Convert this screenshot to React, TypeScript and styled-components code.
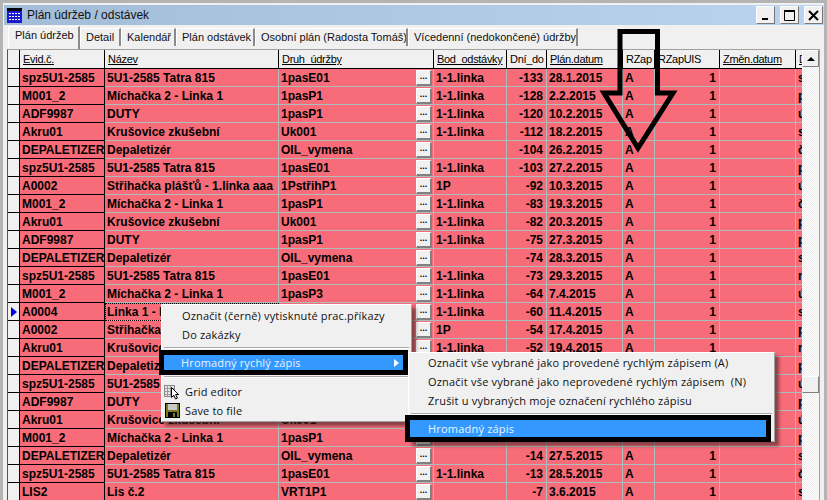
import React from 'react';
import styled, { createGlobalStyle } from 'styled-components';

const PINK = '#f76c78';
const LINE = '#adbcbc';
const FACE = '#f0f0f0';
const FRAME = '#b4b4b4';
const BLUE = '#3399ff';
const COLUMNS = '12px 85px 174px 155px 73px 40px 76px 32px 65px 76px 100px';

type Row = [string, string, string, string, number, string, string];

const ROWS: Row[] = [
  ['spz5U1-2585', '5U1-2585 Tatra 815', '1pasE01', '1-1.linka', -133, '28.1.2015', 's'],
  ['M001_2', 'Míchačka 2 - Linka 1', '1pasP1', '1-1.linka', -128, '2.2.2015', 'p'],
  ['ADF9987', 'DUTY', '1pasP1', '1-1.linka', -120, '10.2.2015', 'ú'],
  ['Akru01', 'Krušovice zkušební', 'Uk001', '1-1.linka', -112, '18.2.2015', 's'],
  ['DEPALETIZER', 'Depaletizér', 'OIL_vymena', '', -104, '26.2.2015', 'č'],
  ['spz5U1-2585', '5U1-2585 Tatra 815', '1pasE01', '1-1.linka', -103, '27.2.2015', 'p'],
  ['A0002', 'Střihačka plášťů - 1.linka aaa', '1PstřihP1', '1P', -92, '10.3.2015', 'ú'],
  ['M001_2', 'Míchačka 2 - Linka 1', '1pasP1', '1-1.linka', -83, '19.3.2015', 'č'],
  ['Akru01', 'Krušovice zkušební', 'Uk001', '1-1.linka', -82, '20.3.2015', 'p'],
  ['ADF9987', 'DUTY', '1pasP1', '1-1.linka', -75, '27.3.2015', 'p'],
  ['DEPALETIZER', 'Depaletizér', 'OIL_vymena', '', -74, '28.3.2015', 's'],
  ['spz5U1-2585', '5U1-2585 Tatra 815', '1pasE01', '1-1.linka', -73, '29.3.2015', 'r'],
  ['M001_2', 'Míchačka 2 - Linka 1', '1pasP3', '1-1.linka', -64, '7.4.2015', 'ú'],
  ['A0004', 'Linka 1 - Lis', '1pasP1', '1-1.linka', -60, '11.4.2015', 's'],
  ['A0002', 'Střihačka plášťů - 1.linka aaa', '1PstřihP1', '1P', -54, '17.4.2015', 'p'],
  ['Akru01', 'Krušovice zkušební', 'Uk001', '1-1.linka', -52, '19.4.2015', 'r'],
  ['DEPALETIZER', 'Depaletizér', 'OIL_vymena', '', -46, '25.4.2015', 'p'],
  ['spz5U1-2585', '5U1-2585 Tatra 815', '1pasE01', '1-1.linka', -45, '26.4.2015', 'ú'],
  ['ADF9987', 'DUTY', '1pasP1', '1-1.linka', -36, '5.5.2015', 'p'],
  ['Akru01', 'Krušovice zkušební', 'Uk001', '1-1.linka', -24, '17.5.2015', 'ú'],
  ['M001_2', 'Míchačka 2 - Linka 1', '1pasP1', '1-1.linka', -15, '26.5.2015', 'p'],
  ['DEPALETIZER', 'Depaletizér', 'OIL_vymena', '', -14, '27.5.2015', 's'],
  ['spz5U1-2585', '5U1-2585 Tatra 815', '1pasE01', '1-1.linka', -13, '28.5.2015', 'č'],
  ['LIS2', 'Lis č.2', 'VRT1P1', '', -7, '3.6.2015', 's'],
];

const TABS = [
  { label: 'Plán údržeb', width: 72 },
  { label: 'Detail', width: 41 },
  { label: 'Kalendář', width: 55 },
  { label: 'Plán odstávek', width: 79 },
  { label: 'Osobní plán (Radosta Tomáš)', width: 153 },
  { label: 'Vícedenní (nedokončené) údržby', width: 170 },
];

const HEADERS: { label: string; plain?: boolean }[] = [
  { label: 'Evid.č.' },
  { label: 'Název' },
  { label: 'Druh_údržby' },
  { label: 'Bod_odstávky' },
  { label: 'Dní_do', plain: true },
  { label: 'Plán.datum' },
  { label: 'RZap', plain: true },
  { label: 'RZapUIS', plain: true },
  { label: 'Změn.datum' },
  { label: 'Dílna' },
];

const GlobalStyle = createGlobalStyle`
  html, body {
    margin: 0;
    padding: 0;
    background: ${FACE};
  }
`;

const Window = styled.div`
  position: relative;
  box-sizing: border-box;
  width: 827px;
  height: 500px;
  overflow: hidden;
  display: flex;
  flex-direction: column;
  background: ${FACE};
  border: 3px solid ${FRAME};
  border-bottom: 0;
  font-family: 'Liberation Sans', Arial, sans-serif;
  color: #000;
`;

const TitleBar = styled.div`
  box-sizing: border-box;
  height: 20px;
  margin: 2px 0 0 1px;
  padding: 0 1px 0 3px;
  display: flex;
  align-items: center;
  gap: 5px;
  flex-shrink: 0;
  background: linear-gradient(90deg, #a3bcd8, #bad4f0);
`;

const Title = styled.span`
  flex: 1;
  font-size: 12px;
  color: #111;
`;

const WinButton = styled.div`
  box-sizing: border-box;
  width: 19px;
  height: 18px;
  display: flex;
  align-items: center;
  justify-content: center;
  background: ${FACE};
  border: 1px solid #fff;
  border-right-color: #777;
  border-bottom-color: #777;
`;

const TabStrip = styled.div`
  height: 24px;
  padding-left: 5px;
  display: flex;
  align-items: flex-end;
  flex-shrink: 0;
`;

const Tab = styled.div<{ $active?: boolean; $width: number }>`
  box-sizing: border-box;
  width: ${(p) => p.$width}px;
  height: ${(p) => (p.$active ? 23 : 18)}px;
  margin-bottom: ${(p) => (p.$active ? 0 : 3)}px;
  padding: ${(p) => (p.$active ? '1px 0 0 6px' : '1px 0 0 5px')};
  font-size: 11px;
  line-height: 14px;
  white-space: nowrap;
  overflow: hidden;
  color: #111;
  background: ${FACE};
  border-top: 1px solid #fff;
  border-left: 1px solid #fff;
  border-right: 2px solid #8a8a8a;
`;

const GridPanel = styled.div`
  flex: 1;
  min-height: 0;
  margin: 0 4px 0 4px;
  display: flex;
  border-top: 1px solid #a0a0a0;
  border-left: 1px solid #555;
`;

const Table = styled.div`
  flex: 1;
  min-width: 0;
  overflow: hidden;
`;

const GridRow = styled.div`
  display: grid;
  grid-template-columns: ${COLUMNS};
  height: 18px;
`;

const HeaderRow = styled(GridRow)`
  height: 19px;
`;

const Cell = styled.div<{ $right?: boolean; $key?: boolean; $focus?: boolean }>`
  box-sizing: border-box;
  display: flex;
  align-items: center;
  justify-content: ${(p) => (p.$right ? 'flex-end' : 'space-between')};
  padding: 1px ${(p) => (p.$right ? 3 : 1)}px 0 2px;
  overflow: hidden;
  white-space: nowrap;
  font-size: 12px;
  font-weight: bold;
  background: ${PINK};
  border-right: 1px solid ${(p) => (p.$key ? '#000' : LINE)};
  border-bottom: 1px solid ${(p) => (p.$key ? '#000' : LINE)};
  outline: ${(p) => (p.$focus ? '1px dotted #000' : 'none')};
  outline-offset: -1px;
`;

const Indicator = styled.div`
  box-sizing: border-box;
  display: flex;
  align-items: center;
  justify-content: center;
  background: ${FACE};
  border-right: 1px solid #000;
  border-bottom: 1px solid #000;
`;

const HeaderCell = styled.div<{ $plain?: boolean }>`
  box-sizing: border-box;
  padding: 2px 0 0 3px;
  overflow: hidden;
  white-space: nowrap;
  font-size: 11px;
  line-height: 14px;
  letter-spacing: -0.3px;
  background: ${FACE};
  border-right: 1px solid #000;
  border-bottom: 1px solid #000;
  text-decoration: ${(p) => (p.$plain ? 'none' : 'underline')};
`;

const EllipsisButton = styled.div`
  box-sizing: border-box;
  flex-shrink: 0;
  width: 16px;
  height: 16px;
  font-size: 9px;
  line-height: 11px;
  text-align: center;
  background: ${FACE};
  border: 1px solid #fff;
  border-right: 2px solid #808080;
  border-bottom: 2px solid #808080;
`;

const Scrollbar = styled.div`
  position: relative;
  flex: 0 0 17px;
  display: flex;
  flex-direction: column;
  background: repeating-conic-gradient(#fff 0 25%, #ececec 0 50%) 0 0 / 2px 2px;
  border-right: 1px solid #a0a0a0;
`;

const ScrollUp = styled.div`
  box-sizing: border-box;
  height: 17px;
  display: flex;
  align-items: center;
  justify-content: center;
  background: ${FACE};
  border: 1px solid #fff;
  border-right-color: #808080;
  border-bottom-color: #808080;
`;

const ScrollThumb = styled(ScrollUp)`
  position: absolute;
  top: 326px;
  left: 0;
  right: 0;
`;

const UpTriangle = styled.span`
  border: 4px solid transparent;
  border-top: 0;
  border-bottom: 4px solid #000;
`;

const Menu = styled.div`
  position: absolute;
  box-sizing: border-box;
  background: #f0f0f0;
  border: 1px solid #fff;
  border-right-color: #a0a0a0;
  border-bottom-color: #a0a0a0;
  box-shadow: 4px 4px 3px rgba(50, 30, 30, 0.55);
  font-family: 'Open Sans', sans-serif;
  font-size: 11px;
  letter-spacing: 0.15px;
  color: #111;
`;

const MainMenu = styled(Menu)`
  left: 158px;
  top: 301px;
  width: 251px;
  height: 118px;
  padding-top: 1px;
`;

const SubMenu = styled(Menu)`
  left: 405px;
  top: 349px;
  width: 367px;
  height: 90px;
  letter-spacing: 0.2px;
`;

const MenuItem = styled.div<{ $indent?: number }>`
  height: 19px;
  padding-left: ${(p) => p.$indent ?? 20}px;
  display: flex;
  align-items: center;
  gap: 5px;
  white-space: nowrap;
`;

/* the black frames were painted over the screenshot around these two items */
const MarkedItem = styled.div<{ $left: number; $right: number; $indent: number; $height: number }>`
  position: relative;
  box-sizing: border-box;
  height: ${(p) => p.$height}px;
  margin: 0 ${(p) => p.$right}px 0 ${(p) => p.$left}px;
  padding-left: ${(p) => p.$indent}px;
  display: flex;
  align-items: center;
  justify-content: space-between;
  color: #e8f2ff;
  background: ${BLUE};
  border: 5px solid #000;
`;

const MenuSeparator = styled.div<{ $before: number; $after: number }>`
  height: 1px;
  margin: ${(p) => p.$before}px 2px ${(p) => p.$after}px;
  background: #a8a8a8;
  border-bottom: 1px solid #fff;
`;

const SubMenuArrow = styled.span`
  margin-right: 4px;
  border: 4px solid transparent;
  border-right: 0;
  border-left: 5px solid #fff;
`;

const CalloutArrow = styled.svg`
  position: absolute;
  left: 593px;
  top: 23px;
  pointer-events: none;
`;

function CalendarIcon() {
  return (
    <svg width="15" height="15" viewBox="0 0 15 15">
      <rect x="0" y="0" width="15" height="15" fill="#fff" />
      <rect x="0" y="0" width="15" height="3" fill="#000" />
      <rect x="0" y="3" width="15" height="12" fill="#1a1ad0" />
      {[2, 5, 8, 11].map((x) =>
        [5, 8, 11].map((y) => <rect key={`${x}-${y}`} x={x} y={y} width="2" height="1" fill="#fff" />),
      )}
    </svg>
  );
}

function MinimizeIcon() {
  return (
    <svg width="11" height="11" viewBox="0 0 11 11">
      <rect x="2" y="8" width="6" height="2" fill="#000" />
    </svg>
  );
}

function MaximizeIcon() {
  return (
    <svg width="11" height="11" viewBox="0 0 11 11">
      <path d="M0.5 1.5h10v9h-10z" fill="none" stroke="#000" />
      <rect x="0" y="0" width="11" height="2" fill="#000" />
    </svg>
  );
}

function CloseIcon() {
  return (
    <svg width="11" height="11" viewBox="0 0 11 11">
      <path d="M1 1l9 9M10 1l-9 9" stroke="#000" strokeWidth="2" />
    </svg>
  );
}

function GridEditorIcon() {
  return (
    <svg width="16" height="18" viewBox="0 0 16 18">
      <rect x="0.5" y="2.5" width="10" height="11" fill="#e8e8e8" stroke="#888" />
      <path d="M0.5 5.5h10M3.5 2.5v11M6.5 2.5v11M0.5 8.5h10M0.5 11.5h10" stroke="#9a9a9a" />
      <path d="M7.5 4.5v10l2.3-2.2 1.8 3.7 1.8-.9-1.8-3.6h3z" fill="#fff" stroke="#000" />
    </svg>
  );
}

function FloppyIcon() {
  return (
    <svg width="16" height="15" viewBox="0 0 16 15">
      <rect x="1" y="0" width="15" height="15" fill="#000" />
      <rect x="2" y="1" width="13" height="13" fill="#7a7a20" />
      <rect x="4" y="1" width="9" height="6" fill="#c8c8c8" />
      <rect x="4" y="9" width="9" height="6" fill="#000" />
      <rect x="9" y="10" width="2" height="4" fill="#7a7a20" />
    </svg>
  );
}

function SelectedMarker() {
  return (
    <svg width="6" height="10" viewBox="0 0 6 10">
      <path d="M0 0l6 5-6 5z" fill="#0000e0" />
    </svg>
  );
}

export default function App() {
  return (
    <>
      <GlobalStyle />
      <Window>
        <TitleBar>
          <CalendarIcon />
          <Title>Plán údržeb / odstávek</Title>
          <WinButton>
            <MinimizeIcon />
          </WinButton>
          <WinButton>
            <MaximizeIcon />
          </WinButton>
          <WinButton>
            <CloseIcon />
          </WinButton>
        </TitleBar>

        <TabStrip>
          {TABS.map((tab, i) => (
            <Tab key={tab.label} $active={i === 0} $width={tab.width}>
              {tab.label}
            </Tab>
          ))}
        </TabStrip>

        <GridPanel>
          <Table>
            <HeaderRow>
              <Indicator />
              {HEADERS.map((h) => (
                <HeaderCell key={h.label} $plain={h.plain}>
                  {h.label}
                </HeaderCell>
              ))}
            </HeaderRow>
            {ROWS.map((row, i) => (
              <GridRow key={i}>
                <Indicator>{i === 13 && <SelectedMarker />}</Indicator>
                <Cell $key>{row[0]}</Cell>
                <Cell $focus={i === 13}>{row[1]}</Cell>
                <Cell>
                  {row[2]}
                  <EllipsisButton>...</EllipsisButton>
                </Cell>
                <Cell>{row[3]}</Cell>
                <Cell $right>{row[4]}</Cell>
                <Cell>{row[5]}</Cell>
                <Cell>A</Cell>
                <Cell $right>1</Cell>
                <Cell />
                <Cell>{row[6]}</Cell>
              </GridRow>
            ))}
          </Table>
          <Scrollbar>
            <ScrollUp>
              <UpTriangle />
            </ScrollUp>
            <ScrollThumb />
          </Scrollbar>
        </GridPanel>

        <CalloutArrow width="90" height="135" viewBox="0 0 90 135">
          <path
            d="M24 5.5H61.5V67H77L42 122L8 67H24Z"
            fill="none"
            stroke="#000"
            strokeWidth="5"
            strokeLinejoin="miter"
          />
        </CalloutArrow>

        <MainMenu>
          <MenuItem>Označit (černě) vytisknuté prac.příkazy</MenuItem>
          <MenuItem>Do zakázky</MenuItem>
          <MenuSeparator $before={3} $after={1} />
          <MarkedItem $left={-3} $right={3} $indent={17} $height={25}>
            Hromadný rychlý zápis
            <SubMenuArrow />
          </MarkedItem>
          <MenuSeparator $before={1} $after={4} />
          <MenuItem $indent={2}>
            <GridEditorIcon />
            Grid editor
          </MenuItem>
          <MenuItem $indent={2}>
            <FloppyIcon />
            Save to file
          </MenuItem>
        </MainMenu>

        <SubMenu>
          <MenuItem $indent={19}>Označit vše vybrané jako provedené rychlým zápisem (A)</MenuItem>
          <MenuItem $indent={19}>Označit vše vybrané jako neprovedené rychlým zápisem&nbsp; (N)</MenuItem>
          <MenuItem $indent={19}>Zrušit u vybraných moje označení rychlého zápisu</MenuItem>
          <MenuSeparator $before={3} $after={0} />
          <MarkedItem $left={-4} $right={3} $indent={18} $height={27}>
            Hromadný zápis
          </MarkedItem>
        </SubMenu>
      </Window>
    </>
  );
}
